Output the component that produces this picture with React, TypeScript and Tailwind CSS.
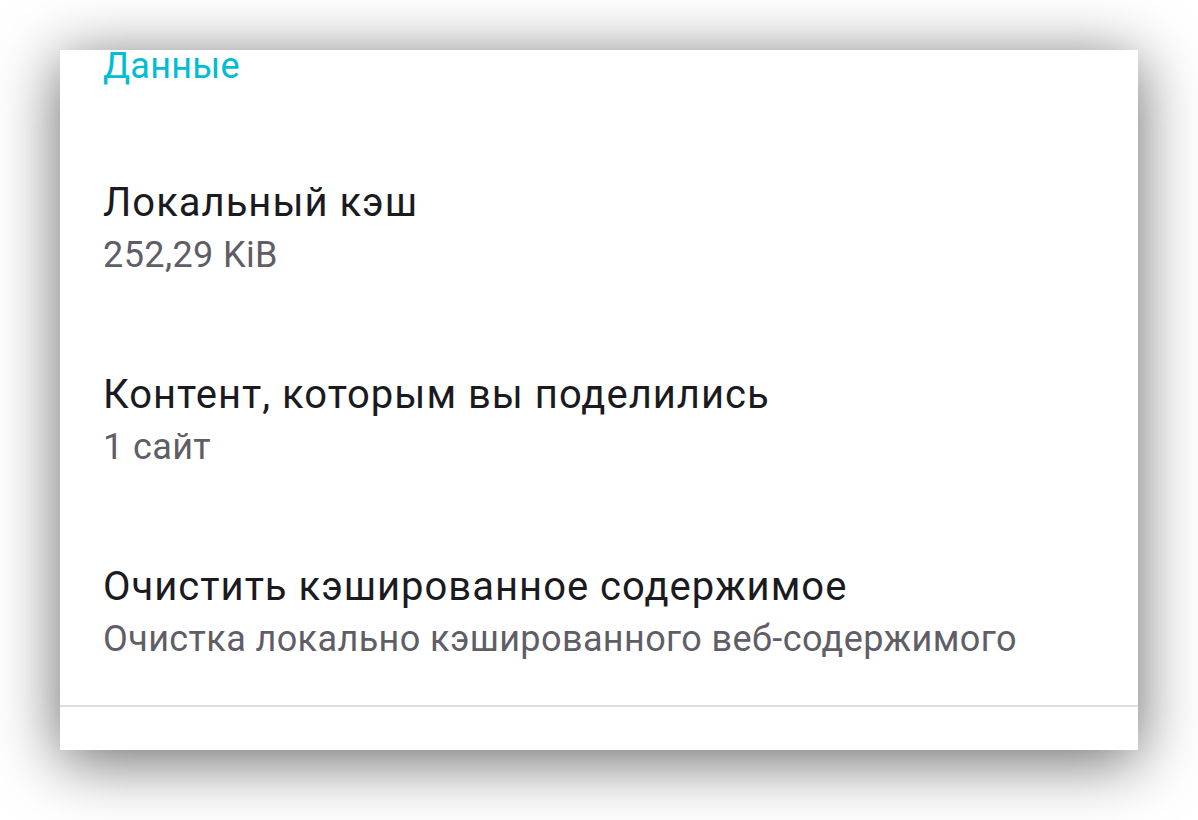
import React from "react";

const rows = [
  { title: "Локальный кэш", sub: "252,29 KiB" },
  { title: "Контент, которым вы поделились", sub: "1 сайт" },
  { title: "Очистить кэшированное содержимое", sub: "Очистка локально кэшированного веб-содержимого" },
];

function Row({ title, sub }: { title: string; sub: string }) {
  return (
    <div className="pt-[50px] pb-[44px] pl-[43px]">
      <div className="text-[40px] leading-[48px] tracking-[1px] text-[#1b1b1f]">{title}</div>
      <div className="mt-[6px] text-[36px] leading-[44px] tracking-[0.4px] text-[#5f5e67]">{sub}</div>
    </div>
  );
}

export default function App() {
  return (
    <div className="min-h-[820px] w-[1198px] bg-white pt-[50px] pl-[60px] font-['Roboto',sans-serif]">
      <div className="w-[1078px] h-[700px] bg-white overflow-hidden shadow-[0_10px_60px_rgba(0,0,0,0.6)]">
        <div className="-mt-[5px] pl-[43px] text-[36px] leading-[42px] tracking-[0.3px] text-[#00bcd4]">Данные</div>
        <div className="mt-[42px]">
          {rows.map((r) => (
            <Row key={r.title} title={r.title} sub={r.sub} />
          ))}
        </div>
        <div className="h-[2px] bg-[#dedede]" />
      </div>
    </div>
  );
}
